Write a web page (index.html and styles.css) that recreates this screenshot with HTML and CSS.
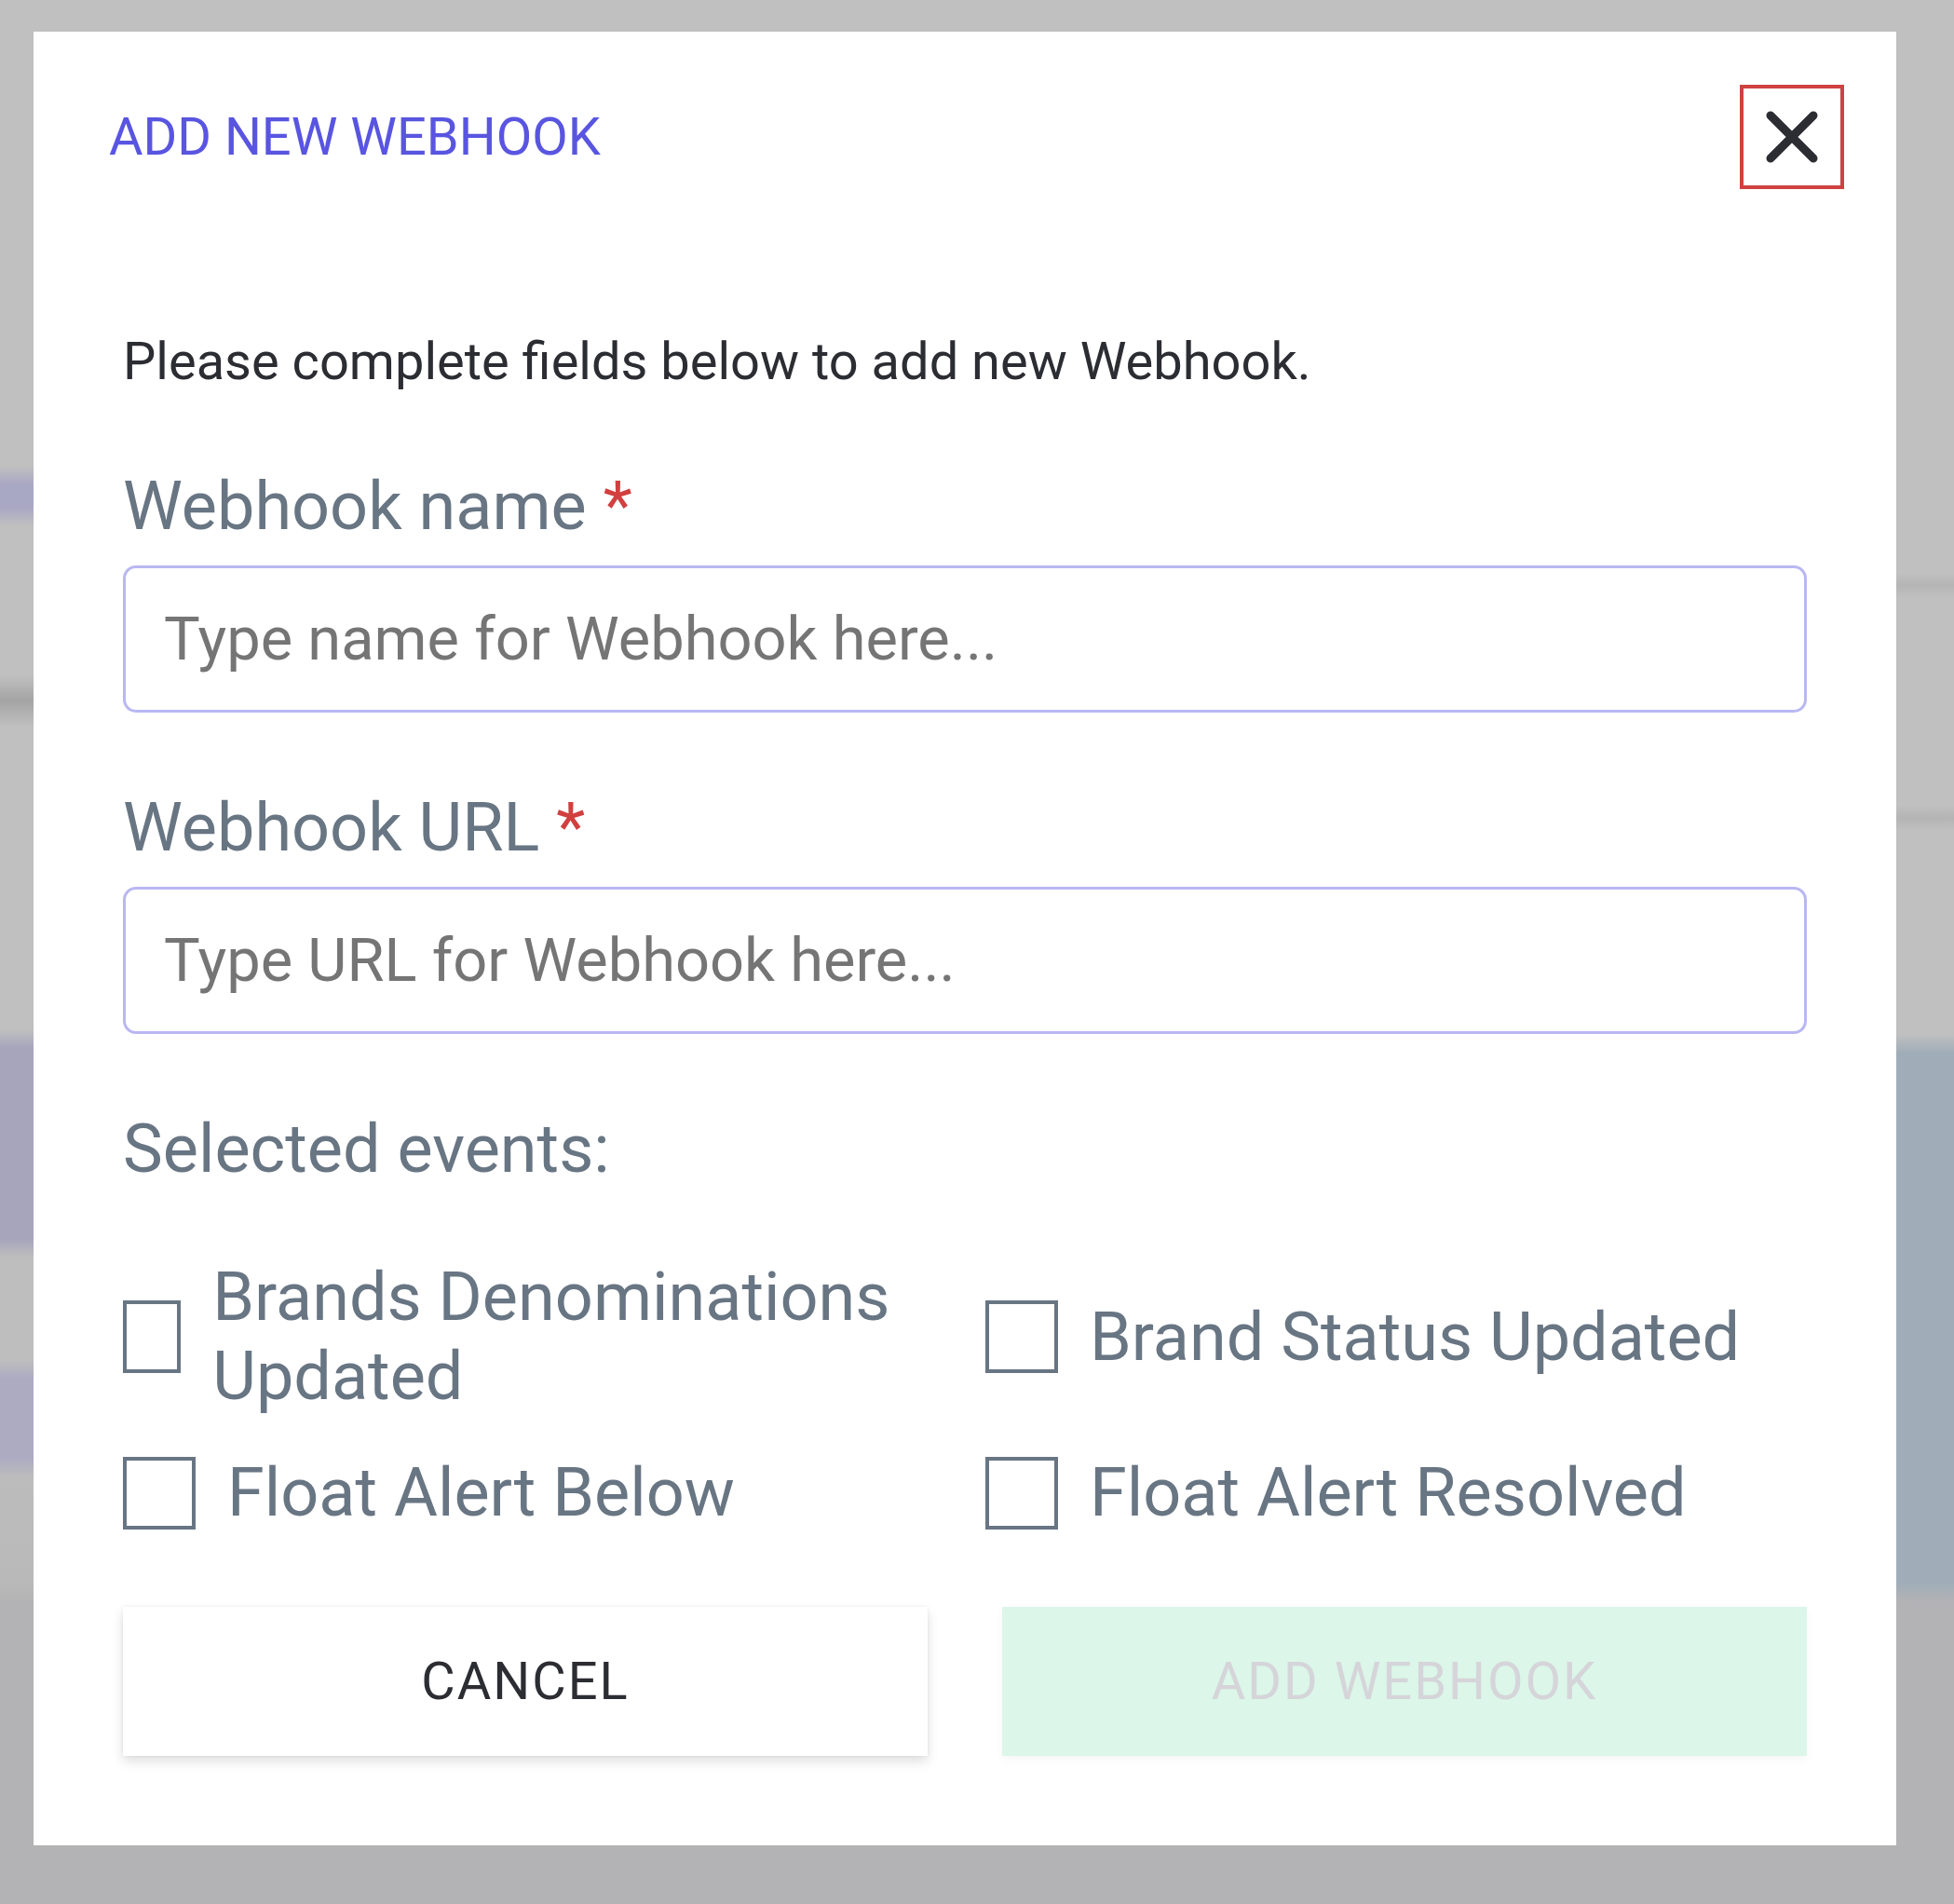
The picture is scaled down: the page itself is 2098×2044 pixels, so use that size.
FILE: index.html
```html
<!DOCTYPE html>
<html lang="en">
<head>
  <meta charset="UTF-8"/>
  <meta name="viewport" content="width=device-width, initial-scale=1.0"/>
  <title>Add new webhook</title>
  <link rel="stylesheet" href="styles.css">
</head>
<body>
  <div class="modal">
    <div class="modal-head">
      <h2 class="modal-title">ADD NEW WEBHOOK</h2>
      <button type="button" class="close-btn" aria-label="Close">
        <svg width="56" height="56" viewBox="0 0 56 56">
          <path d="M5 5 L51 51 M51 5 L5 51" stroke="#2c2d33" stroke-width="9" stroke-linecap="round" fill="none"/>
        </svg>
      </button>
    </div>

    <form class="modal-body">
      <p class="intro">Please complete fields below to add new Webhook.</p>

      <label class="field-label" for="hookName">Webhook name <span class="req">*</span></label>
      <input class="field" id="hookName" placeholder="Type name for Webhook here..."/>

      <label class="field-label" for="hookUrl">Webhook URL <span class="req">*</span></label>
      <input class="field" id="hookUrl" placeholder="Type URL for Webhook here..."/>

      <div class="field-label">Selected events:</div>
      <div class="events">
        <label class="event"><span class="box"></span><span>Brands Denominations Updated</span></label>
        <label class="event"><span class="box"></span><span>Brand Status Updated</span></label>
        <label class="event"><span class="box"></span><span>Float Alert Below</span></label>
        <label class="event"><span class="box"></span><span>Float Alert Resolved</span></label>
      </div>

      <div class="actions">
        <button type="button" class="btn btn-cancel">CANCEL</button>
        <button type="button" class="btn btn-add" disabled>ADD WEBHOOK</button>
      </div>
    </form>
  </div>
</body>
</html>
```

FILE: styles.css
```css
html,body{margin:0;height:100%;}
body{
  box-sizing:border-box;
  padding:34px 62px 64px 36px;
  font-family:Roboto,"Noto Sans",sans-serif;
  /* dimmed page behind the dialog */
  background:
    linear-gradient(#c0c0c0 0,#c0c0c0 500px,#a9a8c4 520px,#a9a8c4 545px,#c0c0c0 565px,#c0c0c0 725px,#a4a4a4 752px,#c0c0c0 780px,#c0c0c0 1105px,#a6a5bc 1125px,#a6a5bc 1330px,#bebebe 1350px,#bebebe 1460px,#acabc2 1480px,#acabc2 1565px,#bcbcbc 1585px,#b9b9b9 1700px,#b3b3b5 1720px,#b3b3b5 100%) left/50% 100% no-repeat,
    linear-gradient(#c0c0c0 0,#c0c0c0 615px,#b5b5b5 628px,#c0c0c0 642px,#c0c0c0 865px,#b4b4b4 878px,#c0c0c0 892px,#c0c0c0 1110px,#a0adb8 1130px,#a0adb8 1700px,#b3b3b5 1720px,#b3b3b5 100%) right/50% 100% no-repeat;
}

.modal{
  width:2000px;background:#fff;
  padding:57px 0 96px;box-sizing:border-box;
}
.modal-head{
  display:flex;align-items:center;justify-content:space-between;
  padding:0 56px 0 81px;
}
.modal-title{margin:0;font-size:56px;font-weight:400;color:#5955e1;line-height:1;}
.close-btn{
  width:112px;height:112px;padding:0;background:#fff;
  border:4px solid #d04141;display:flex;align-items:center;justify-content:center;
  cursor:pointer;
}

.modal-body{padding:0 96px;display:flex;flex-direction:column;}
.intro{margin:152px 0 81px;font-size:56px;line-height:66px;color:#2c2d33;}

.field-label{font-size:72px;line-height:84px;color:#687583;margin:0 0 21px;}
.req{color:#d23f3f;}
.field{
  height:158px;box-sizing:border-box;margin:0 0 82px;padding:0 41px;
  border:3px solid #b9b7f2;border-radius:14px;outline:none;
  font-family:inherit;font-size:65px;color:#333;
}
.field::placeholder{color:#757575;}

.events{
  display:grid;grid-template-columns:1fr 1fr;column-gap:44px;row-gap:40px;
  margin:53px 0 80px;
}
.event{display:flex;align-items:center;gap:34px;font-size:72px;line-height:85px;color:#687583;}
.box{width:78px;height:78px;box-sizing:border-box;border:4px solid #687583;}

.actions{display:flex;gap:80px;}
.btn{
  flex:1;height:160px;border:none;font-family:inherit;font-size:56px;letter-spacing:2px;
  cursor:pointer;
}
.btn-cancel{background:#fff;color:#2c2d33;box-shadow:0 6px 12px rgba(0,0,0,.13),0 0 4px rgba(0,0,0,.06);}
.btn-add{background:#dcf6e9;color:#d5d5d9;box-shadow:0 4px 10px rgba(0,0,0,.04);}
.btn:disabled{cursor:not-allowed;}
```
